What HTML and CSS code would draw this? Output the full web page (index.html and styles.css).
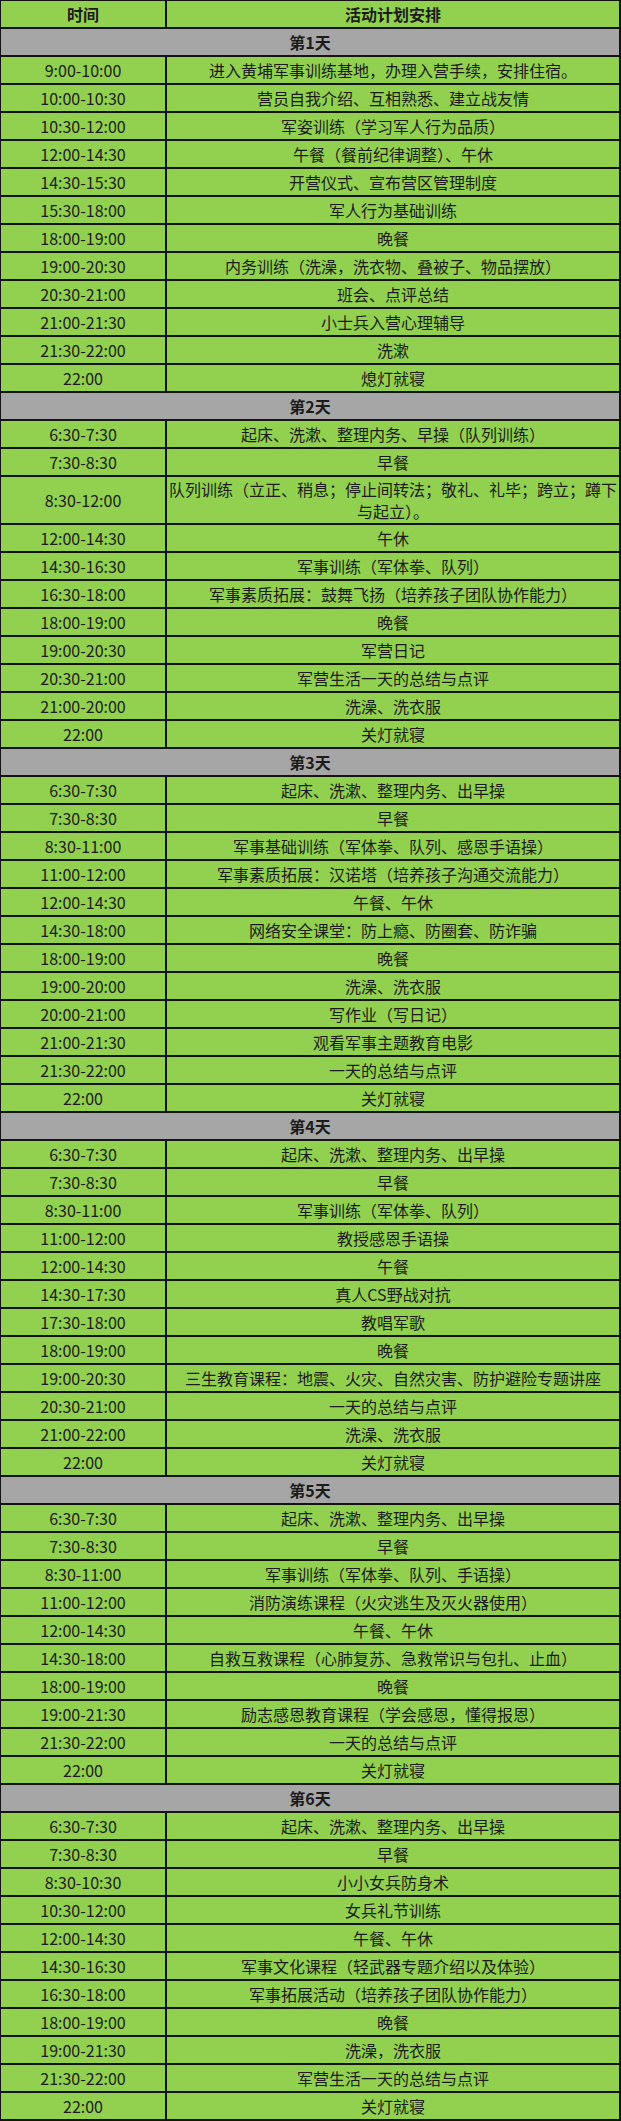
FILE: index.html
```html
<!DOCTYPE html>
<html lang="zh-CN">
<head>
<meta charset="utf-8">
<title>军事夏令营活动安排</title>
<link rel="stylesheet" href="styles.css">
</head>
<body>
<div class="sheet">
  <div class="row head"><div class="time">时间</div><div class="act">活动计划安排</div></div>

  <div class="row day">第1天</div>
  <div class="row"><div class="time">9:00-10:00</div><div class="act">进入黄埔军事训练基地，办理入营手续，安排住宿。</div></div>
  <div class="row"><div class="time">10:00-10:30</div><div class="act">营员自我介绍、互相熟悉、建立战友情</div></div>
  <div class="row"><div class="time">10:30-12:00</div><div class="act">军姿训练（学习军人行为品质）</div></div>
  <div class="row"><div class="time">12:00-14:30</div><div class="act">午餐（餐前纪律调整）、午休</div></div>
  <div class="row"><div class="time">14:30-15:30</div><div class="act">开营仪式、宣布营区管理制度</div></div>
  <div class="row"><div class="time">15:30-18:00</div><div class="act">军人行为基础训练</div></div>
  <div class="row"><div class="time">18:00-19:00</div><div class="act">晚餐</div></div>
  <div class="row"><div class="time">19:00-20:30</div><div class="act">内务训练（洗澡，洗衣物、叠被子、物品摆放）</div></div>
  <div class="row"><div class="time">20:30-21:00</div><div class="act">班会、点评总结</div></div>
  <div class="row"><div class="time">21:00-21:30</div><div class="act">小士兵入营心理辅导</div></div>
  <div class="row"><div class="time">21:30-22:00</div><div class="act">洗漱</div></div>
  <div class="row"><div class="time">22:00</div><div class="act">熄灯就寝</div></div>

  <div class="row day">第2天</div>
  <div class="row"><div class="time">6:30-7:30</div><div class="act">起床、洗漱、整理内务、早操（队列训练）</div></div>
  <div class="row"><div class="time">7:30-8:30</div><div class="act">早餐</div></div>
  <div class="row tall"><div class="time">8:30-12:00</div><div class="act">队列训练（立正、稍息；停止间转法；敬礼、礼毕；跨立；蹲下与起立）。</div></div>
  <div class="row"><div class="time">12:00-14:30</div><div class="act">午休</div></div>
  <div class="row"><div class="time">14:30-16:30</div><div class="act">军事训练（军体拳、队列）</div></div>
  <div class="row"><div class="time">16:30-18:00</div><div class="act">军事素质拓展：鼓舞飞扬（培养孩子团队协作能力）</div></div>
  <div class="row"><div class="time">18:00-19:00</div><div class="act">晚餐</div></div>
  <div class="row"><div class="time">19:00-20:30</div><div class="act">军营日记</div></div>
  <div class="row"><div class="time">20:30-21:00</div><div class="act">军营生活一天的总结与点评</div></div>
  <div class="row"><div class="time">21:00-20:00</div><div class="act">洗澡、洗衣服</div></div>
  <div class="row"><div class="time">22:00</div><div class="act">关灯就寝</div></div>

  <div class="row day">第3天</div>
  <div class="row"><div class="time">6:30-7:30</div><div class="act">起床、洗漱、整理内务、出早操</div></div>
  <div class="row"><div class="time">7:30-8:30</div><div class="act">早餐</div></div>
  <div class="row"><div class="time">8:30-11:00</div><div class="act">军事基础训练（军体拳、队列、感恩手语操）</div></div>
  <div class="row"><div class="time">11:00-12:00</div><div class="act">军事素质拓展：汉诺塔（培养孩子沟通交流能力）</div></div>
  <div class="row"><div class="time">12:00-14:30</div><div class="act">午餐、午休</div></div>
  <div class="row"><div class="time">14:30-18:00</div><div class="act">网络安全课堂：防上瘾、防圈套、防诈骗</div></div>
  <div class="row"><div class="time">18:00-19:00</div><div class="act">晚餐</div></div>
  <div class="row"><div class="time">19:00-20:00</div><div class="act">洗澡、洗衣服</div></div>
  <div class="row"><div class="time">20:00-21:00</div><div class="act">写作业（写日记）</div></div>
  <div class="row"><div class="time">21:00-21:30</div><div class="act">观看军事主题教育电影</div></div>
  <div class="row"><div class="time">21:30-22:00</div><div class="act">一天的总结与点评</div></div>
  <div class="row"><div class="time">22:00</div><div class="act">关灯就寝</div></div>

  <div class="row day">第4天</div>
  <div class="row"><div class="time">6:30-7:30</div><div class="act">起床、洗漱、整理内务、出早操</div></div>
  <div class="row"><div class="time">7:30-8:30</div><div class="act">早餐</div></div>
  <div class="row"><div class="time">8:30-11:00</div><div class="act">军事训练（军体拳、队列）</div></div>
  <div class="row"><div class="time">11:00-12:00</div><div class="act">教授感恩手语操</div></div>
  <div class="row"><div class="time">12:00-14:30</div><div class="act">午餐</div></div>
  <div class="row"><div class="time">14:30-17:30</div><div class="act">真人CS野战对抗</div></div>
  <div class="row"><div class="time">17:30-18:00</div><div class="act">教唱军歌</div></div>
  <div class="row"><div class="time">18:00-19:00</div><div class="act">晚餐</div></div>
  <div class="row"><div class="time">19:00-20:30</div><div class="act">三生教育课程：地震、火灾、自然灾害、防护避险专题讲座</div></div>
  <div class="row"><div class="time">20:30-21:00</div><div class="act">一天的总结与点评</div></div>
  <div class="row"><div class="time">21:00-22:00</div><div class="act">洗澡、洗衣服</div></div>
  <div class="row"><div class="time">22:00</div><div class="act">关灯就寝</div></div>

  <div class="row day">第5天</div>
  <div class="row"><div class="time">6:30-7:30</div><div class="act">起床、洗漱、整理内务、出早操</div></div>
  <div class="row"><div class="time">7:30-8:30</div><div class="act">早餐</div></div>
  <div class="row"><div class="time">8:30-11:00</div><div class="act">军事训练（军体拳、队列、手语操）</div></div>
  <div class="row"><div class="time">11:00-12:00</div><div class="act">消防演练课程（火灾逃生及灭火器使用）</div></div>
  <div class="row"><div class="time">12:00-14:30</div><div class="act">午餐、午休</div></div>
  <div class="row"><div class="time">14:30-18:00</div><div class="act">自救互救课程（心肺复苏、急救常识与包扎、止血）</div></div>
  <div class="row"><div class="time">18:00-19:00</div><div class="act">晚餐</div></div>
  <div class="row"><div class="time">19:00-21:30</div><div class="act">励志感恩教育课程（学会感恩，懂得报恩）</div></div>
  <div class="row"><div class="time">21:30-22:00</div><div class="act">一天的总结与点评</div></div>
  <div class="row"><div class="time">22:00</div><div class="act">关灯就寝</div></div>

  <div class="row day">第6天</div>
  <div class="row"><div class="time">6:30-7:30</div><div class="act">起床、洗漱、整理内务、出早操</div></div>
  <div class="row"><div class="time">7:30-8:30</div><div class="act">早餐</div></div>
  <div class="row"><div class="time">8:30-10:30</div><div class="act">小小女兵防身术</div></div>
  <div class="row"><div class="time">10:30-12:00</div><div class="act">女兵礼节训练</div></div>
  <div class="row"><div class="time">12:00-14:30</div><div class="act">午餐、午休</div></div>
  <div class="row"><div class="time">14:30-16:30</div><div class="act">军事文化课程（轻武器专题介绍以及体验）</div></div>
  <div class="row"><div class="time">16:30-18:00</div><div class="act">军事拓展活动（培养孩子团队协作能力）</div></div>
  <div class="row"><div class="time">18:00-19:00</div><div class="act">晚餐</div></div>
  <div class="row"><div class="time">19:00-21:30</div><div class="act">洗澡，洗衣服</div></div>
  <div class="row"><div class="time">21:30-22:00</div><div class="act">军营生活一天的总结与点评</div></div>
  <div class="row"><div class="time">22:00</div><div class="act">关灯就寝</div></div>
</div>
</body>
</html>
```

FILE: styles.css
```css
html, body {
  margin: 0;
  padding: 0;
  background: #92d050;
}

.sheet {
  width: 621px;
  box-sizing: border-box;
  border-top: 1px solid #141414;
  border-left: 1px solid #141414;
  font-family: "Noto Sans CJK SC", "Microsoft YaHei", sans-serif;
  font-size: 16px;
  color: #1c1c1c;
  background: #92d050;
}

.row {
  display: grid;
  grid-template-columns: 166px 1fr;
  height: 28px;
  box-sizing: border-box;
  border-bottom: 2px solid #141414;
}

.row.tall {
  height: 48px;
}

.time,
.act {
  display: flex;
  align-items: center;
  justify-content: center;
  text-align: center;
  border-right: 2px solid #141414;
  line-height: 20px;
  white-space: nowrap;
}

.tall .act {
  white-space: normal;
  line-height: 22px;
}

.head .time,
.head .act {
  font-weight: bold;
}

.row.day {
  display: flex;
  align-items: center;
  justify-content: center;
  background: #a6a6a6;
  font-weight: bold;
  border-right: 2px solid #141414;
  line-height: 20px;
}
```
